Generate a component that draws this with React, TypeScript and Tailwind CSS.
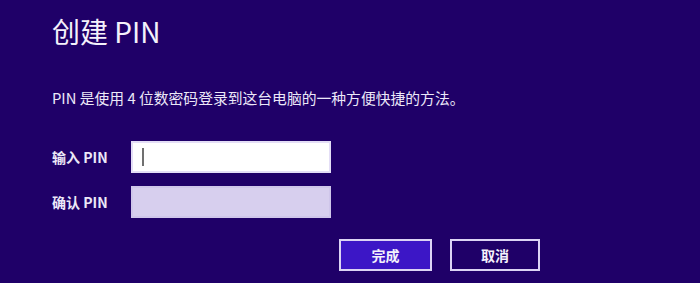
import React from 'react';

const font = { fontFamily: '"Noto Sans CJK SC", "Liberation Sans", sans-serif' };

function PinRow({ label, children }: { label: string; children: React.ReactNode }) {
  return (
    <div className="flex items-center">
      <div className="w-[79px] text-[14px] font-semibold text-[#ece8f8]">{label}</div>
      {children}
    </div>
  );
}

export default function App() {
  return (
    <div className="w-[700px] h-[283px] bg-[#1f0068] text-white overflow-hidden" style={font}>
      <div className="pl-[52px] pt-[13px]">
        <h1 className="text-[28px] leading-[36px] font-normal text-[#f4f1fb]">创建 PIN</h1>
        <p className="mt-[39px] text-[14.8px] leading-[20px] text-[#ece8f8]">
          PIN 是使用 4 位数密码登录到这台电脑的一种方便快捷的方法。
        </p>

        <div className="mt-[33px] flex flex-col gap-[13px]">
          <PinRow label="输入 PIN">
            <div className="w-[200px] h-[32px] bg-white border-2 border-[#e4def6] flex items-center pl-[9px]">
              <div className="w-[2px] h-[18px] bg-[#707070]" />
            </div>
          </PinRow>
          <PinRow label="确认 PIN">
            <div className="w-[200px] h-[32px] bg-[#d7cfee] border-2 border-[#cfc6ea]" />
          </PinRow>
        </div>

        <div className="mt-[21px] flex gap-[18px] pl-[287px]">
          <button className="w-[93px] h-[32px] bg-[#3c16c6] border-2 border-[#dcd4f4] text-[14px] font-semibold text-[#f4f1fb]">
            完成
          </button>
          <button className="w-[90px] h-[32px] bg-[#1f0068] border-2 border-[#dcd4f4] text-[14px] font-semibold text-[#f4f1fb]">
            取消
          </button>
        </div>
      </div>
    </div>
  );
}
